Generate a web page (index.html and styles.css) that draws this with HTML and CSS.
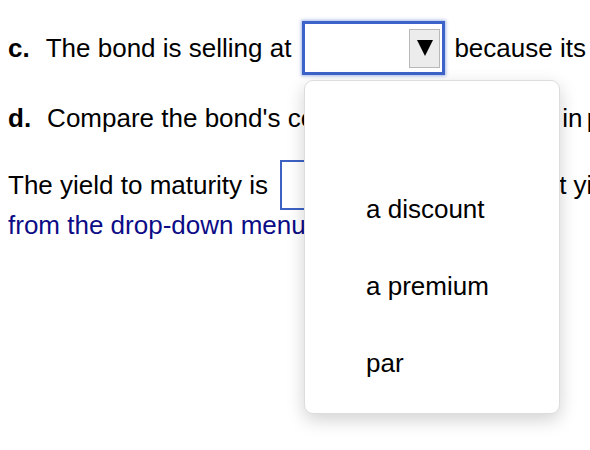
FILE: index.html
```html
<!DOCTYPE html>
<html lang="en">
 <head>
  <title>Bond question</title>
  <meta charset="UTF-8">
  <link rel="stylesheet" href="styles.css">
 </head>
 <body>

 <div class="question">

  <div class="row row-c">
   <span class="label">c.</span>
   <span>The bond is selling at</span>
   <div class="select focused">
    <span class="value"></span>
    <span class="arrow"><svg width="16" height="18" viewBox="0 0 16 18"><polygon points="0,1 16,1 8,17" fill="#000"/></svg></span>
   </div>
   <span>because its coupon rate is</span>
  </div>

  <div class="row row-d">
   <span class="label">d.</span>
   <span>Compare the bond's coupon rate to its yield, in<span class="tight"> </span>part c.</span>
  </div>

  <div class="row row-ytm">
   <span>The yield to maturity is</span>
   <div class="select plain"></div>
   <span>the current yield.</span>
  </div>

  <div class="row hint">from the drop-down menus.)</div>

 </div>

 <div class="dropdown">
  <div class="option"></div>
  <div class="option">a discount</div>
  <div class="option">a premium</div>
  <div class="option">par</div>
 </div>

 </body>
</html>
```

FILE: styles.css
```css
html, body { margin: 0; padding: 0; background: #ffffff; }
body { width: 590px; height: 450px; overflow: hidden; position: relative; font-family: "Liberation Sans", Arial, sans-serif; font-size: 26px; color: #000000; }

.question { padding: 0 0 0 8px; }
.row { display: flex; align-items: center; white-space: nowrap; line-height: 30px; }
.label { font-weight: bold; margin-right: 16px; }
.tight { letter-spacing: -3px; }

.row-c { margin-top: 21px; height: 54px; }
.row-d { margin-top: 28px; }
.row-ytm { margin-top: 27px; height: 50px; }
.hint { color: #0c0c86; }

.select { flex: none; box-sizing: border-box; display: flex; align-items: center; justify-content: flex-end; background: #ffffff; }
.select.focused { width: 143px; height: 54px; margin: 0 9px 0 11px; border: 3px solid #3c63c9; box-shadow: 0 0 3px 1px rgba(60, 99, 201, 0.45); padding-right: 2px; }
.select.plain { width: 152px; height: 50px; margin: 0 10px 0 12px; border: 2px solid #3e62c4; }

.arrow { box-sizing: border-box; width: 31px; height: 39px; background: #ececec; border: 1px solid #b9b9b9; display: flex; align-items: center; justify-content: center; }
.arrow svg { display: block; }

.dropdown { position: absolute; left: 304px; top: 80px; width: 256px; box-sizing: border-box; padding: 13px 0 11px; background: #ffffff; border: 1px solid #dddddd; border-radius: 9px; box-shadow: 0 6px 18px rgba(0, 0, 0, 0.18); }
.option { height: 77px; line-height: 77px; padding-left: 61px; }
```
